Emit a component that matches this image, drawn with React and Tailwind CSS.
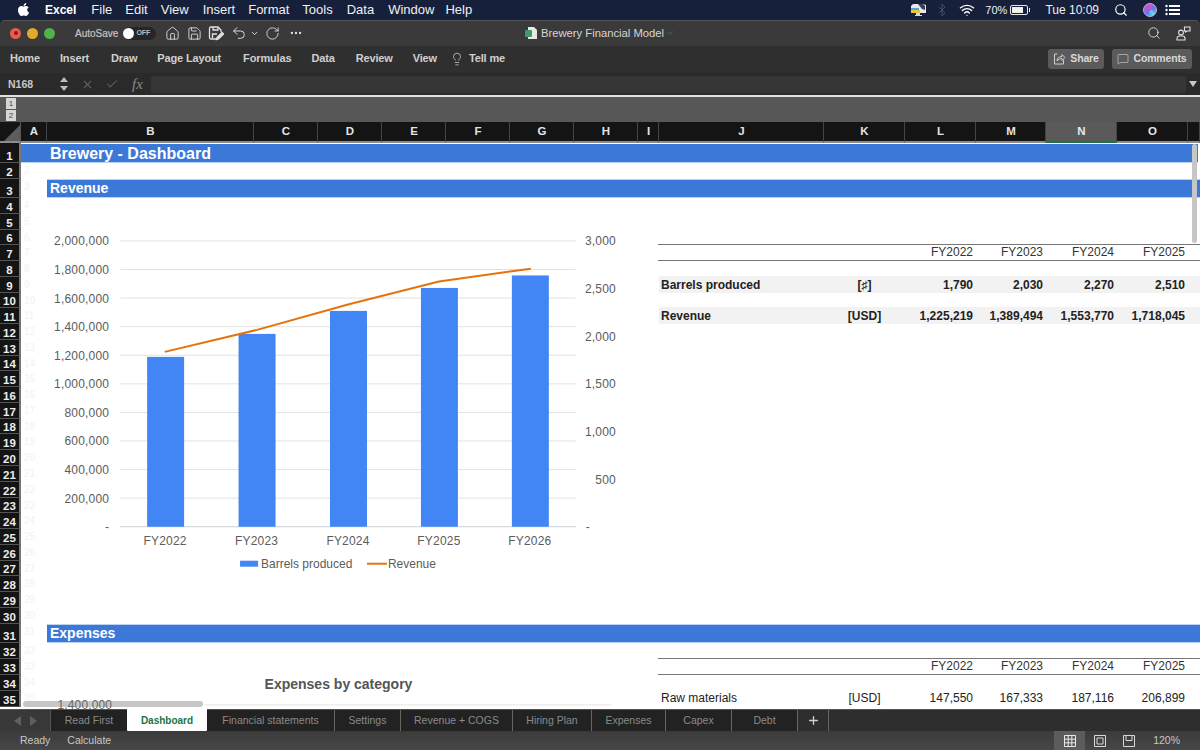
import React from "react";
import { FaApple } from "react-icons/fa";
import { Home, Save, Undo2, RotateCw, ChevronDown, MoreHorizontal, Search, Lightbulb, Wifi, Bluetooth, X, Check, MessageSquare, Plus } from "lucide-react";

const menus = [
  ["File", "ml-[15px]"], ["Edit", "ml-[13px]"], ["View", "ml-[13px]"], ["Insert", "ml-[14px]"], ["Format", "ml-[13px]"],
  ["Tools", "ml-[13px]"], ["Data", "ml-[14px]"], ["Window", "ml-[14px]"], ["Help", "ml-[11px]"],
];
const ribbon = [
  ["Home", "ml-[10px]"], ["Insert", "ml-[20px]"], ["Draw", "ml-[22px]"], ["Page Layout", "ml-[20px]"], ["Formulas", "ml-[22px]"],
  ["Data", "ml-[20px]"], ["Review", "ml-[21px]"], ["View", "ml-[20px]"],
];
const cols = [
  ["A", false], ["B", false], ["C", false], ["D", false], ["E", false], ["F", false], ["G", false], ["H", false], ["I", false],
  ["J", false], ["K", false], ["L", false], ["M", false], ["N", true], ["O", false], ["", false],
];
const rows = Array.from({ length: 35 }, (_, i) => i + 1);
const tabs = [
  ["Read First", "w-[77px]"], ["Financial statements", "w-[128px]"], ["Settings", "w-[66px]"], ["Revenue + COGS", "w-[112px]"],
  ["Hiring Plan", "w-[79px]"], ["Expenses", "w-[74px]"], ["Capex", "w-[66px]"], ["Debt", "w-[66px]"],
];
const leftAxis = ["2,000,000", "1,800,000", "1,600,000", "1,400,000", "1,200,000", "1,000,000", "800,000", "600,000", "400,000", "200,000", "-"];
const rightAxis = ["3,000", "2,500", "2,000", "1,500", "1,000", "500", "-"];
const bars = [
  { x: 147, top: 357, label: "FY2022" },
  { x: 238.5, top: 334, label: "FY2023" },
  { x: 330, top: 311, label: "FY2024" },
  { x: 421, top: 288, label: "FY2025" },
  { x: 512, top: 275.5, label: "FY2026" },
];

function TableRow({ rowClass, bg, bold, label, unit, values }) {
  return (
    <div className={`${rowClass} col-start-11 col-end-[-1] grid grid-cols-subgrid items-center text-[12px] text-[#222] ${bg ? "bg-[#f2f2f2] -mt-px" : ""} ${bold ? "font-bold" : ""}`}>
      <div className="pl-[2px]">{label}</div>
      <div className="text-center">{unit}</div>
      {values.map((v) => (
        <div key={v} className="text-right pr-[3px] whitespace-nowrap">{v}</div>
      ))}
    </div>
  );
}

function HeaderRow({ rowClass }) {
  return (
    <div className={`${rowClass} col-start-11 col-end-[-1] grid grid-cols-subgrid items-center text-[12px] leading-[14px] pb-px text-[#333] border-y border-[#777] -ml-px -mt-px`}>
      <div />
      <div />
      {["FY2022", "FY2023", "FY2024", "FY2025"].map((v) => (
        <div key={v} className="text-right pr-[3px]">{v}</div>
      ))}
    </div>
  );
}

function Chart() {
  return (
    <svg viewBox="21 198 638 426" className="col-start-2 col-end-11 row-start-5 row-end-[32] w-full h-full" fontFamily="'Liberation Sans', Arial, sans-serif" fontSize="12">
      {leftAxis.map((t, i) => {
        const y = 241 + i * 28.6;
        return (
          <g key={t}>
            <line x1="120" x2="576" y1={y} y2={y} stroke={i === 10 ? "#c9d0d6" : "#e2e2e2"} strokeWidth="1" />
            <text x="109" y={y + 4.5} textAnchor="end" fill="#5c5c5c" letterSpacing="0.2">{t}</text>
          </g>
        );
      })}
      {rightAxis.map((t, i) => {
        const y = 241 + i * 47.67;
        return <text key={t} x={t === "-" ? 586 : 616} y={y + 4.5} textAnchor={t === "-" ? "start" : "end"} fill="#5c5c5c" letterSpacing="0.15">{t}</text>;
      })}
      {bars.map((b) => (
        <g key={b.label}>
          <rect x={b.x} y={b.top} width="37" height={527 - b.top} fill="#4285f4" />
          <text x={b.x + 18} y="545.500" textAnchor="middle" fill="#5c5c5c" letterSpacing="0.2">{b.label}</text>
        </g>
      ))}
      <polyline points="164.5,352 257,330 348,304.5 439,281.5 531,268.7" fill="none" stroke="#e8710a" strokeWidth="2" />
      <rect x="240" y="561" width="18" height="6" fill="#4285f4" />
      <text x="261" y="568" fill="#5c5c5c">Barrels produced</text>
      <line x1="367" x2="387" y1="564" y2="564" stroke="#e8710a" strokeWidth="2" />
      <text x="388" y="568" fill="#5c5c5c">Revenue</text>
    </svg>
  );
}

export default function App() {
  return (
    <div className="w-[1200px] h-[750px] overflow-hidden flex flex-col bg-[#18213a] font-['Liberation_Sans',Arial,sans-serif]">
      {/* macOS menu bar */}
      <div className="h-[20px] shrink-0 flex items-center text-[13px] text-[#f0f0f0] bg-[#17203a]">
        <FaApple className="ml-[16px] mr-[14px] text-[15px] text-white -mt-[2px]" />
        <span className="font-bold text-[12px] text-white">Excel</span>
        {menus.map(([m, c]) => (
          <span key={m} className={c}>{m}</span>
        ))}
        <div className="ml-auto flex items-center">
          <svg width="17" height="16" viewBox="0 0 17 16" className="mr-[8px]">
            <path d="M3 2h10l3 1v8H1V4z" fill="#e8e8e8" />
            <path d="M8 2l5 0 2 2v4l-3-1z" fill="#3a3f4f" />
            <rect x="1" y="8" width="9" height="3" fill="#e3c83e" />
            <path d="M6 11h4v2h2v1H5v-1h1z" fill="#d8d8d8" />
            <rect x="1" y="6" width="8" height="2" fill="#5ba0dd" />
          </svg>
          <Bluetooth size={14} strokeWidth={1.5} className="text-[#4d5567] mr-[10px]" />
          <Wifi size={16} strokeWidth={2} className="text-white mr-[10px]" />
          <span className="text-[11px] mr-[3px]">70%</span>
          <span className="w-[18px] h-[10px] border border-[#e8e8e8] rounded-[2px] flex items-stretch p-px mr-[1px]">
            <span className="w-[11px] bg-[#f0f0f0]" />
          </span>
          <span className="w-[1px] h-[4px] bg-[#e8e8e8] mr-[15px]" />
          <span className="text-[12px] mr-[15px]">Tue 10:09</span>
          <Search size={14} strokeWidth={2} className="text-white mr-[15px]" />
          <span className="w-[14px] h-[14px] rounded-full bg-[conic-gradient(#d44fd0,#5b7cf0,#6fd2e8,#5b7cf0,#c24fe0,#d44fd0)] mr-[8px] border border-[#bbb]" />
          <svg width="15" height="12" viewBox="0 0 15 12" className="mr-[20px]" fill="#fff">
            <circle cx="1.5" cy="2" r="1.2" />
            <circle cx="1.5" cy="6" r="1.2" />
            <circle cx="1.5" cy="10" r="1.2" />
            <rect x="4" y="1" width="11" height="2" />
            <rect x="4" y="5" width="11" height="2" />
            <rect x="4" y="9" width="11" height="2" />
          </svg>
        </div>
      </div>

      {/* Excel title bar */}
      <div className="h-[26px] shrink-0 rounded-t-[5px] bg-[#3a3a3a] border-t border-[#555] pb-[1px] grid grid-cols-[1fr_auto_1fr] items-center text-[#c8c8c8]">
        <div className="flex items-center">
          <span className="ml-[10px] w-[11px] h-[11px] rounded-full bg-[#ec5a53] flex items-center justify-center">
            <span className="w-[4px] h-[4px] rounded-full bg-[#8c1a14]" />
          </span>
          <span className="ml-[6px] w-[11px] h-[11px] rounded-full bg-[#e0aa2f]" />
          <span className="ml-[6px] w-[11px] h-[11px] rounded-full bg-[#4fb24a]" />
          <span className="ml-[20px] text-[10px] text-[#c4c4c4] [-webkit-text-stroke:0.2px_#c4c4c4]">AutoSave</span>
          <span className="ml-[5px] w-[33px] h-[13px] rounded-full bg-[#262626] flex items-center">
            <span className="w-[11px] h-[11px] rounded-full bg-white" />
            <span className="ml-[2px] text-[7px] font-bold text-[#bdbdbd]">OFF</span>
          </span>
          <Home size={15} strokeWidth={1.4} className="ml-[9px] text-[#e2e2e2]" />
          <Save size={15} strokeWidth={1.4} className="ml-[7px] text-[#e2e2e2]" />
          <svg width="16" height="16" viewBox="0 0 16 16" className="ml-[6px]" fill="none" stroke="#e2e2e2" strokeWidth="1.3">
            <path d="M8 14H3a1.5 1.5 0 0 1-1.5-1.5v-9A1.5 1.5 0 0 1 3 2h7l3 3v2" />
            <path d="M5 2v3h5V2M4.5 13V9H9" />
            <path d="M8.5 14.5l.5-2 5-5 1.5 1.5-5 5z" fill="#e2e2e2" />
          </svg>
          <Undo2 size={16} strokeWidth={1.4} className="ml-[7px] text-[#e2e2e2]" />
          <ChevronDown size={9} strokeWidth={2.5} className="ml-[3px] text-[#e2e2e2]" />
          <RotateCw size={15} strokeWidth={1.4} className="ml-[6px] text-[#e2e2e2]" />
          <MoreHorizontal size={14} strokeWidth={2} className="ml-[9px] text-[#e2e2e2]" />
        </div>
        <div className="flex items-center text-[11.25px] text-[#d6d6d6]">
          <svg width="12" height="14" viewBox="0 0 12 14" className="mr-[4px]">
            <path d="M3 1h6l3 3v9H3z" fill="#e8e8e8" />
            <rect x="0" y="4" width="7" height="7" rx="1" fill="#3f9b6c" />
          </svg>
          <span>Brewery Financial Model</span>
          <ChevronDown size={10} strokeWidth={1.5} className="ml-[1px] text-[#777]" />
        </div>
        <div className="flex items-center justify-end">
          <Search size={14} strokeWidth={1.5} className="mr-[15px] text-[#e2e2e2]" />
          <svg width="15" height="15" viewBox="0 0 15 15" className="mr-[9px]" fill="none" stroke="#e2e2e2" strokeWidth="1.1">
            <circle cx="5" cy="6.5" r="2.4" />
            <path d="M1 14v-1.5A2.5 2.5 0 0 1 3.5 10h3A2.5 2.5 0 0 1 9 12.5V14z" />
            <path d="M8.5 1h5.500v4h-3l-1.5 1V5H8.500z" />
          </svg>
        </div>
      </div>

      {/* Ribbon tabs */}
      <div className="h-[27px] shrink-0 bg-[#2f2f2f] pb-[2px] flex items-center text-[11px] font-bold tracking-[-0.15px] text-[#cfcfcf]">
        {ribbon.map(([r, c]) => (
          <span key={r} className={c}>{r}</span>
        ))}
        <Lightbulb size={14} strokeWidth={1.3} className="ml-[13px] text-[#cfcfcf]" />
        <span className="ml-[5px]">Tell me</span>
        <button className="ml-auto w-[56px] h-[20px] rounded-[3px] bg-[#5b5b5b] flex items-center justify-center text-[10.5px] text-[#d8d8d8]">
          <svg width="13" height="13" viewBox="0 0 13 13" className="mr-[4px]" fill="none" stroke="#cfcfcf" strokeWidth="1">
            <path d="M4.500 2H1.500v10h9V8" />
            <path d="M4 9c0-3 2-4.500 5-4.500V2.500l3 3-3 3V6.500c-2 0-4 1-5 2.500z" />
          </svg>
          Share
        </button>
        <button className="ml-[8px] mr-[8px] w-[80px] h-[20px] rounded-[3px] bg-[#5b5b5b] flex items-center justify-center text-[10.5px] text-[#d8d8d8]">
          <MessageSquare size={12} strokeWidth={1.2} className="mr-[4px]" />
          Comments
        </button>
      </div>

      {/* Formula bar */}
      <div className="h-[22px] shrink-0 bg-[#2a2a2a] flex items-center text-[#cfcfcf]">
        <span className="ml-[8px] w-[52px] pt-px text-[10.5px] font-bold text-[#c8c8c8]">N168</span>
        <span className="flex flex-col gap-[4px] items-center">
          <span className="border-x-[4px] border-x-transparent border-b-[5px] border-b-[#bcbcbc]" />
          <span className="border-x-[4px] border-x-transparent border-t-[5px] border-t-[#bcbcbc]" />
        </span>
        <X size={13} strokeWidth={2} className="ml-[13px] text-[#5f5f5f]" />
        <Check size={14} strokeWidth={1.8} className="ml-[11px] text-[#5f5f5f]" />
        <span className="ml-[13px] w-[14px] text-[15px] italic text-[#8a8a8a] font-['Liberation_Serif',serif]">fx</span>
        <div className="ml-[5px] h-[17px] flex-1 rounded-[2px] bg-[#363636]" />
        <span className="mx-[3px] border-x-[4px] border-x-transparent border-t-[6px] border-t-[#c8c8c8]" />
      </div>
      <div className="h-[2px] shrink-0 bg-[#e0e0e0]" />

      {/* Outline bar */}
      <div className="h-[25px] shrink-0 bg-[#575757] flex items-center">
        <div className="ml-[6px] w-[10px] flex flex-col gap-px">
          <span className="h-[11px] bg-[#d6d6d6] text-[8px] leading-[11px] text-center text-[#444]">1</span>
          <span className="h-[11px] bg-[#d6d6d6] text-[8px] leading-[11px] text-center text-[#444]">2</span>
        </div>
      </div>

      {/* Sheet */}
      <div className="relative flex-1 min-h-0 overflow-hidden bg-white grid grid-cols-[21px_26px_207px_repeat(6,64px)_21px_165px_81px_71px_70px_71px_71px_1fr] grid-rows-[21px_20px_16px_19px_repeat(27,15.78px)_19px_repeat(4,16px)_1fr]">
        {/* Column headers */}
        <div className="col-start-1 row-start-1 bg-[#141414] border-b-2 border-[#8c8c8c] border-r border-r-[#555] flex items-end justify-end">
          <span className="w-0 h-0 border-l-[16px] border-l-transparent border-b-[16px] border-b-[#5c5c5c]" />
        </div>
        {cols.map(([c, active], i) => (
          <div
            key={c + i}
            className={`row-start-1 flex items-center justify-center pl-px pt-px text-[11.5px] font-bold border-r border-[#444] border-b-2 ${
              active ? "bg-[#5a5a5a] text-[#e8e8e8] border-b-[#217346]" : "bg-[#141414] text-[#e4e4e4] border-b-[#8c8c8c]"
            }`}
          >
            {c}
          </div>
        ))}

        {/* Row headers and ghost numbers */}
        {rows.map((r) => (
          <React.Fragment key={r}>
            <div
              style={{ gridRow: r + 1 }}
              className="col-start-1 bg-[#141414] border-b border-[#555] border-r-2 border-r-[#777] flex items-end justify-center text-[11.5px] leading-[12px] font-bold text-[#ededed]"
            >
              {r}
            </div>
            {r > 1 && (
              <div style={{ gridRow: r + 1 }} className="col-start-2 pl-[3px] text-[10px] leading-[16px] text-[#f2f2f2] overflow-hidden">
                {r}
              </div>
            )}
          </React.Fragment>
        ))}

        {/* Section bars */}
        <div className="col-start-2 col-end-[-1] row-start-2 mt-px bg-[#3c78d8] border-b border-[#bcd3f3] flex items-center pl-[29px] pt-[1px] mr-[2px] text-[16px] font-bold text-white">
          Brewery - Dashboard
        </div>
        <div className="col-start-3 col-end-[-1] row-start-4 bg-[#3c78d8] border-y border-[#bcd3f3] flex items-center pl-[3px] text-[14px] font-bold text-white">
          Revenue
        </div>
        <div className="col-start-3 col-end-[-1] row-start-[32] bg-[#3c78d8] border-y border-[#bcd3f3] flex items-center pl-[3px] pt-[1px] text-[14px] font-bold text-white">
          Expenses
        </div>

        <Chart />

        {/* Revenue table */}
        <HeaderRow rowClass="row-start-8" />
        <TableRow rowClass="row-start-10" bg bold label="Barrels produced" unit="[♯]" values={["1,790", "2,030", "2,270", "2,510"]} />
        <TableRow rowClass="row-start-12" bg bold label="Revenue" unit="[USD]" values={["1,225,219", "1,389,494", "1,553,770", "1,718,045"]} />

        {/* Expenses */}
        <div className="col-start-2 col-end-11 row-start-[35] flex items-center justify-center pr-[3px] pt-[3px] text-[14px] font-bold text-[#555]">
          Expenses by category
        </div>
        <svg viewBox="21 691 638 18.500" className="relative z-10 col-start-2 col-end-11 row-start-[36] row-end-[38] w-full h-full" fontFamily="'Liberation Sans', Arial, sans-serif" fontSize="12">
          <line x1="203" x2="614" y1="705" y2="705" stroke="#e6e6e6" />
          <text x="110" y="709" textAnchor="end" fill="#666" letterSpacing="0.2">1,400,000</text>
        </svg>
        <HeaderRow rowClass="row-start-[34]" />
        <TableRow rowClass="row-start-[36] -mt-[2px]" label="Raw materials" unit="[USD]" values={["147,550", "167,333", "187,116", "206,899"]} />

        {/* Scrollbars */}
        <div className="absolute top-[22px] right-[3px] w-[5px] h-[99px] rounded-full bg-[#c6c6c6]" />
        <div className="absolute left-[23px] bottom-[2px] w-[180px] h-[6px] rounded-full bg-[#c6c6c6]" />
      </div>

      {/* Sheet tabs */}
      <div className="h-[22px] shrink-0 bg-[#2e2e2e] border-t border-[#555] flex text-[10.5px] text-[#8a8a8a]">
        <div className="w-[51px] bg-[#383838] flex items-center justify-center gap-[9px] border-r border-[#555]">
          <span className="border-y-[5px] border-y-transparent border-r-[7px] border-r-[#5f5f5f]" />
          <span className="border-y-[5px] border-y-transparent border-l-[7px] border-l-[#5f5f5f]" />
        </div>
        <div className="w-[76px] bg-[#222] flex items-center justify-center">Read First</div>
        <div className="w-[80px] bg-white flex items-center justify-center text-[10px] font-bold text-[#217346] -mt-px rounded-b-[1px]">Dashboard</div>
        {tabs.slice(1).map(([t, w]) => (
          <div key={t} className={`${w} bg-[#222] flex items-center justify-center border-r border-[#666]`}>{t}</div>
        ))}
        <div className="w-[31px] flex items-center justify-center border-r border-[#666]">
          <Plus size={13} strokeWidth={2.5} className="text-[#d0d0d0]" />
        </div>
      </div>

      {/* Status bar */}
      <div className="flex-none h-[19px] bg-gradient-to-b from-[#3b3b3b] to-[#474747] flex items-center text-[10.5px] text-[#c8c8c8]">
        <span className="ml-[20px]">Ready</span>
        <span className="ml-[17px]">Calculate</span>
        <div className="ml-auto h-full w-[31px] bg-[#5c5c5c] flex items-center justify-center">
          <svg width="12" height="12" viewBox="0 0 12 12" fill="none" stroke="#e8e8e8" strokeWidth="1">
            <path d="M.5.5h11v11H.5zM4.200.5v11M7.800.5v11M.5 4.200h11M.5 7.800h11" />
          </svg>
        </div>
        <svg width="12" height="12" viewBox="0 0 12 12" fill="none" stroke="#d8d8d8" strokeWidth="1" className="ml-[9px]">
          <path d="M.5.5h11v11H.5z" />
          <path d="M3 3h6v6H3z" />
        </svg>
        <svg width="12" height="12" viewBox="0 0 12 12" fill="none" stroke="#d8d8d8" strokeWidth="1" className="ml-[17px]">
          <path d="M.5.5h11v11H.5z" />
          <path d="M3 .5v5h6v-5" />
        </svg>
        <span className="ml-[18px] mr-[20px]">120%</span>
      </div>
    </div>
  );
}
